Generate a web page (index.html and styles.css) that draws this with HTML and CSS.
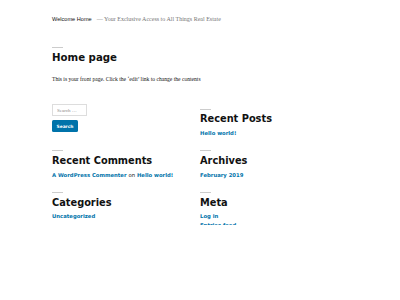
FILE: index.html
```html
<!DOCTYPE html>
<html lang="en">
<head>
<meta charset="utf-8">
<title>Welcome Home</title>
<link rel="stylesheet" href="styles.css">
</head>
<body>
<div class="page">
  <header class="site-header">
    <span class="site-title">Welcome Home</span>
    <span class="site-desc">— Your Exclusive Access to All Things Real Estate</span>
  </header>
  <main class="entry">
    <h1 class="entry-title">Home page</h1>
    <p class="entry-content">This is your front page. Click the ‘edit’ link to change the contents</p>
  </main>
  <section class="widgets">
    <div class="widget widget-search">
      <input class="search-field" type="text" placeholder="Search …">
      <button class="search-submit">Search</button>
    </div>
    <div class="widget">
      <h2 class="widget-title">Recent Posts</h2>
      <ul class="widget-list"><li><a href="#">Hello world!</a></li></ul>
    </div>
    <div class="widget">
      <h2 class="widget-title">Recent Comments</h2>
      <ul class="widget-list"><li><a href="#">A WordPress Commenter</a> <span class="on">on</span> <a href="#">Hello world!</a></li></ul>
    </div>
    <div class="widget">
      <h2 class="widget-title">Archives</h2>
      <ul class="widget-list"><li><a href="#">February 2019</a></li></ul>
    </div>
    <div class="widget">
      <h2 class="widget-title">Categories</h2>
      <ul class="widget-list"><li><a href="#">Uncategorized</a></li></ul>
    </div>
    <div class="widget">
      <h2 class="widget-title">Meta</h2>
      <ul class="widget-list"><li><a href="#">Log in</a></li><li><a href="#">Entries feed</a></li><li><a href="#">Comments feed</a></li></ul>
    </div>
  </section>
</div>
</body>
</html>
```
FILE: styles.css
```css
html, body {
  margin: 0;
  padding: 0;
  background: #fff;
}
.page {
  height: 225px;
  overflow: hidden;
  padding: 0 52px;
  color: #111;
  font-family: "DejaVu Sans", sans-serif;
}
.site-header {
  padding-top: 12px;
  height: 8px;
  line-height: 8px;
  white-space: nowrap;
}
.site-title {
  font-family: "Liberation Sans", Arial, sans-serif;
  font-size: 5.6px;
  color: #111;
}
.site-desc {
  font-family: "Liberation Serif", serif;
  font-size: 6px;
  color: #767676;
}
.entry {
  padding-top: 27px;
}
.entry-title {
  margin: 0;
  font-size: 10.2px;
  font-weight: bold;
  line-height: 14px;
}
.entry-title::before,
.widget-title::before {
  content: "";
  display: block;
  width: 10.5px;
  height: 1px;
  background: #ccc;
  margin-bottom: 3px;
}
.entry-content {
  margin: 10px 0 0;
  font-family: "Liberation Serif", serif;
  font-size: 5.6px;
  line-height: 8px;
  color: #111;
}
.widgets {
  margin-top: 21.3px;
  display: grid;
  grid-template-columns: 148px 148px;
  row-gap: 8.8px;
}
.widget {
  padding-top: 4.4px;
}
.widget-search {
  padding-top: 0;
  display: flex;
  flex-direction: column;
  align-items: flex-start;
  gap: 4px;
}
.search-field {
  box-sizing: border-box;
  width: 34.5px;
  height: 12px;
  margin: 0;
  padding: 0 4px;
  border: 1px solid #ddd;
  border-radius: 0;
  font-family: "Liberation Serif", serif;
  font-size: 5px;
  color: #767676;
}
.search-field::placeholder {
  color: #888;
}
.search-submit {
  box-sizing: border-box;
  width: 26px;
  height: 12px;
  margin: 0;
  padding: 0;
  border: none;
  border-radius: 1.5px;
  background: #0073aa;
  color: #fff;
  font-family: "DejaVu Sans", sans-serif;
  font-weight: bold;
  font-size: 4.4px;
}
.widget-title {
  margin: 0;
  font-size: 9.8px;
  line-height: 14px;
  font-weight: bold;
  padding-top: 0;
}
.widget-title::before {
  margin-bottom: 2.6px;
}
.widget-list {
  list-style: none;
  margin: 2.6px 0 0;
  padding: 0;
  font-size: 5.3px;
  line-height: 8.3px;
  font-weight: bold;
}
.widget-list a {
  color: #0073aa;
  text-decoration: none;
}
.widget-list .on {
  font-weight: normal;
  color: #111;
}
```
